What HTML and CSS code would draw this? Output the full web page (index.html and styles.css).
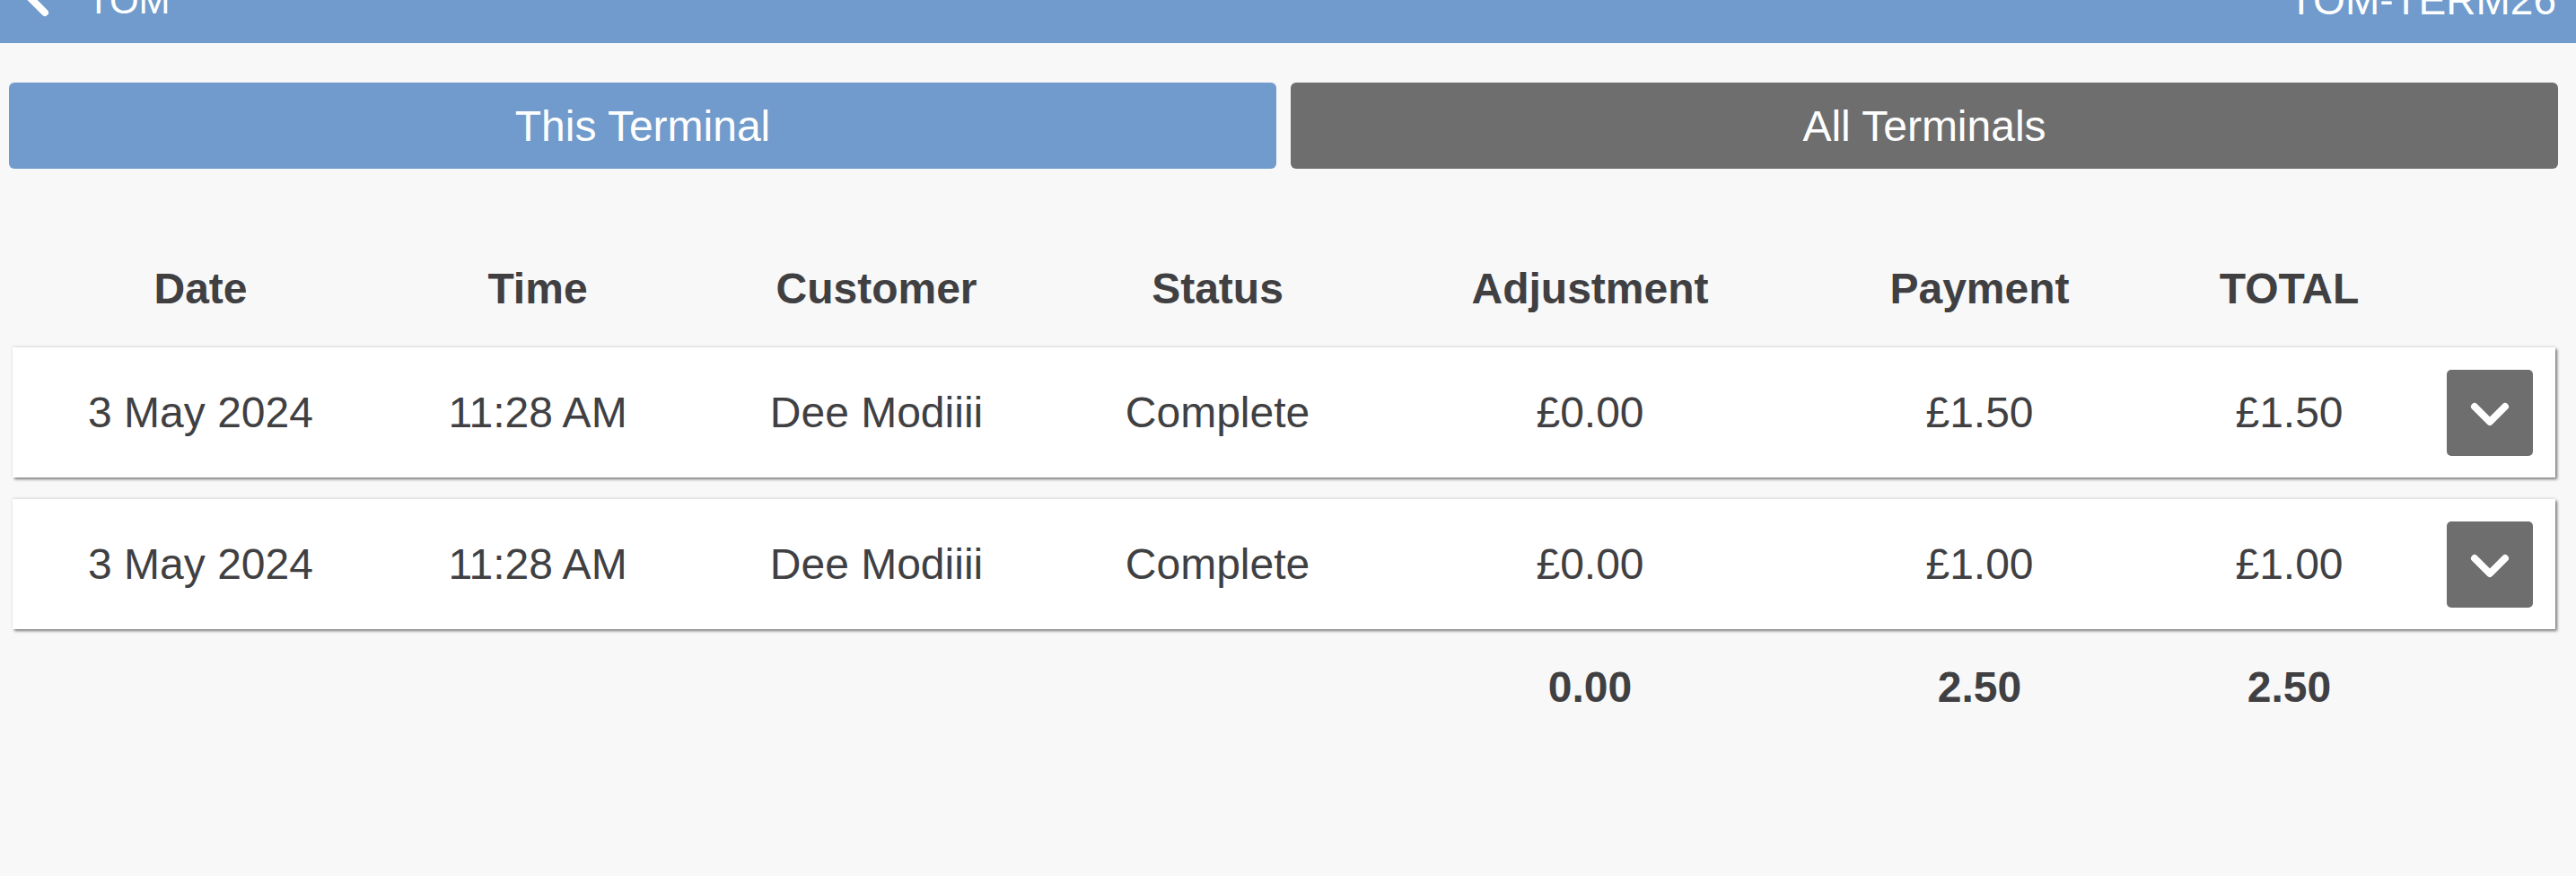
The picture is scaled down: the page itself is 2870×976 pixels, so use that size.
FILE: index.html
```html
<!DOCTYPE html>
<html lang="en">
<head>
<meta charset="utf-8">
<title>Transactions</title>
<link rel="stylesheet" href="styles.css">
</head>
<body>
<header class="topbar">
  <svg class="back" width="60" height="48" viewBox="0 0 60 48" aria-hidden="true">
    <polyline points="50,14 27,-9 50,-32" fill="none" stroke="#fff" stroke-width="8" stroke-linecap="round" stroke-linejoin="round"/>
  </svg>
  <span class="bar-title">TOM</span>
  <span class="bar-terminal">TOM-TERM26</span>
</header>

<nav class="tabs">
  <div class="tab tab-active">This Terminal</div>
  <div class="tab tab-inactive">All Terminals</div>
</nav>

<section class="table">
  <div class="grid head-row">
    <div>Date</div><div>Time</div><div>Customer</div><div>Status</div><div>Adjustment</div><div>Payment</div><div>TOTAL</div><div></div><div></div>
  </div>

  <div class="grid card">
    <div>3 May 2024</div><div>11:28 AM</div><div>Dee Modiiii</div><div>Complete</div><div>£0.00</div><div>£1.50</div><div>£1.50</div><div></div>
    <div class="expand"><svg width="96" height="96" viewBox="0 0 96 96" aria-hidden="true"><polyline points="31,41 48,58 65,41" fill="none" stroke="#fff" stroke-width="8" stroke-linecap="round" stroke-linejoin="round"/></svg></div>
  </div>

  <div class="grid card card-next">
    <div>3 May 2024</div><div>11:28 AM</div><div>Dee Modiiii</div><div>Complete</div><div>£0.00</div><div>£1.00</div><div>£1.00</div><div></div>
    <div class="expand"><svg width="96" height="96" viewBox="0 0 96 96" aria-hidden="true"><polyline points="31,41 48,58 65,41" fill="none" stroke="#fff" stroke-width="8" stroke-linecap="round" stroke-linejoin="round"/></svg></div>
  </div>

  <div class="grid total-row">
    <div></div><div></div><div></div><div></div><div>0.00</div><div>2.50</div><div>2.50</div><div></div><div></div>
  </div>
</section>
</body>
</html>
```

FILE: styles.css
```css
html, body {
  margin: 0;
  padding: 0;
}

body {
  background: #f8f8f8;
  font-family: "Liberation Sans", Arial, Helvetica, sans-serif;
  color: #404043;
}

.topbar {
  display: flex;
  align-items: flex-start;
  height: 48px;
  overflow: hidden;
  background: #709bcc;
  color: #fff;
}

.back {
  flex: none;
  display: block;
}

.bar-title {
  margin-left: 37px;
  margin-top: -20px;
  font-size: 42px;
  line-height: 42px;
}

.bar-terminal {
  margin-left: auto;
  margin-right: 22px;
  margin-top: -23px;
  font-size: 46px;
  line-height: 46px;
}

.tabs {
  display: flex;
  gap: 16px;
  margin: 44px 20px 0 10px;
}

.tab {
  flex: 1;
  height: 96px;
  border-radius: 6px;
  display: flex;
  align-items: center;
  justify-content: center;
  color: #fff;
  font-size: 48px;
}

.tab-active {
  background: #709bcc;
}

.tab-inactive {
  background: #6e6e6e;
}

.table {
  margin: 0 23px 0 14px;
}

.grid {
  display: grid;
  grid-template-columns: 375px 376px 379px 381px 449px 419px 271px 40px 96px;
  padding-left: 22px;
  text-align: center;
  font-size: 48px;
  line-height: 48px;
}

.head-row {
  margin-top: 110px;
  height: 48px;
  font-weight: bold;
}

.card {
  margin-top: 41px;
  height: 145px;
  align-items: center;
  background: #fff;
  box-shadow: 2px 2px 3px rgba(0, 0, 0, 0.5), 0 -1px 3px rgba(0, 0, 0, 0.1);
}

.card-next {
  margin-top: 24px;
}

.expand {
  width: 96px;
  height: 96px;
  border-radius: 5px;
  background: #6e6e6e;
}

.expand svg {
  display: block;
}

.total-row {
  margin-top: 41px;
  height: 48px;
  font-weight: bold;
}
```
